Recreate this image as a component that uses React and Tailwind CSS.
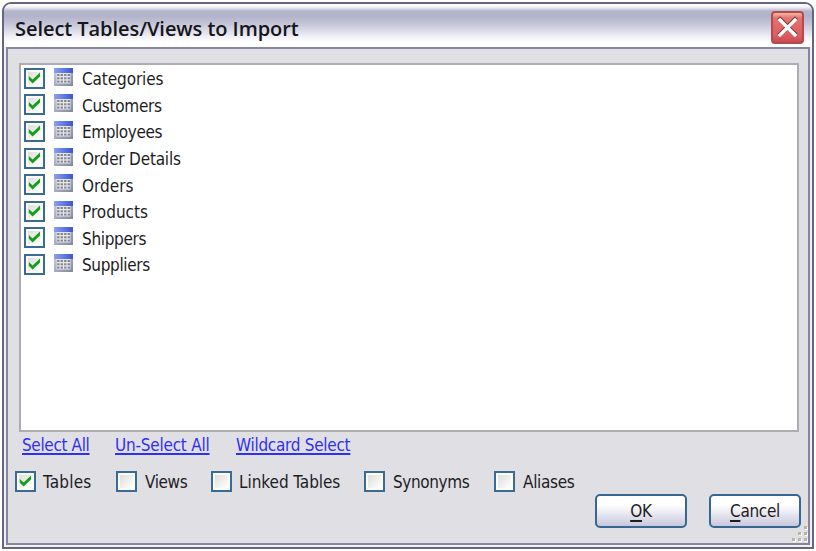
import React from "react";

const rows = [
  ["Categories", "tracking-[-0.1px]"],
  ["Customers", "tracking-[-0.28px]"],
  ["Employees", "tracking-[-0.42px]"],
  ["Order Details", "tracking-[-0.2px]"],
  ["Orders", "tracking-[0px]"],
  ["Products", "tracking-[0px]"],
  ["Shippers", "tracking-[-0.33px]"],
  ["Suppliers", "tracking-[-0.36px]"],
];

const filters = [
  ["Tables", "w-[101px] gap-[7px] tracking-[0.2px]", true],
  ["Views", "w-[95px] gap-[8px] tracking-[-0.4px]", false],
  ["Linked Tables", "w-[153px] gap-[7px] tracking-[-0.05px]", false],
  ["Synonyms", "w-[130px] gap-[8px] tracking-[-0.38px]", false],
  ["Aliases", "w-[90px] gap-[8px] tracking-[-0.33px]", false],
];

const buttons = [
  ["OK", "tracking-[-0.2px]"],
  ["Cancel", "tracking-[-0.3px]"],
];

function Check({ on }) {
  return (
    <span className="flex size-[21px] shrink-0 items-center justify-center border-2 border-[#396b95] bg-[#fbfbfa] p-[2px]">
      <span className="flex size-[13px] shrink-0 items-center justify-center bg-gradient-to-br from-[#dededa] to-white">
        {on && (
          <svg width="13" height="13" viewBox="0 0 13 13" className="shrink-0">
            <path d="M0.8 4 L4.6 7.4 L12 0.6 V4.4 L4.6 11.4 L0.8 7.8 Z" fill="#14a018" />
          </svg>
        )}
      </span>
    </span>
  );
}

function TableIcon() {
  const xs = [3.5, 7, 10.5, 14];
  return (
    <svg width="19" height="18" viewBox="0 0 19 18" className="mt-[-3px] shrink-0">
      <defs>
        <linearGradient id="head" x1="0" x2="1">
          <stop offset="0" stopColor="#8ba1f4" />
          <stop offset="1" stopColor="#3d55cf" />
        </linearGradient>
        <linearGradient id="body" x1="0" x2="1" y1="0" y2="1">
          <stop offset="0" stopColor="#ced2e0" />
          <stop offset="1" stopColor="#8186a0" />
        </linearGradient>
      </defs>
      <rect width="19" height="18" fill="url(#body)" />
      <rect width="19" height="5" fill="url(#head)" />
      <rect x="2.5" y="5" width="14" height="10.5" fill="#e6e7ec" />
      {[6, 9.3, 12.6].map((y) =>
        xs.map((x) => <rect key={x + "-" + y} x={x - 0.4} y={y} width="2.4" height="2" fill="#85878f" />)
      )}
    </svg>
  );
}

export default function App() {
  return (
    <div className="h-[551px] w-[816px] overflow-hidden bg-white pl-[2px] pt-[2px] font-['DejaVu_Sans_Condensed','DejaVu_Sans',sans-serif] text-[17px] text-[#1d1d1f]">
      <div className="flex h-[547px] w-[812px] flex-col rounded-t-[9px] border-2 border-[#666681] bg-[#f0f0f6] px-[2px] pb-[2px]">
        <header className="mx-[-2px] flex h-[43px] shrink-0 items-start justify-between rounded-t-[7px] bg-[linear-gradient(180deg,#fff_0px,#f5f5fa_3px,#b5b5cc_7px,#b2b2ca_12px,#c8c8da_21px,#eeeef5_32px,#fff_38px,#fff_43px)] pl-[11px] pr-[8px]">
          <h1 className="mt-[11px] whitespace-nowrap font-['Open_Sans',sans-serif] text-[20px] font-semibold leading-[28px] tracking-[-0.05px] text-[#15151a]">
            Select Tables/Views to Import
          </h1>
          <button aria-label="Close" className="mt-[7px] flex size-[33px] items-center justify-center rounded-[4px] border-2 border-[#b44a50] bg-[linear-gradient(180deg,#f2b9a0_0px,#e27270_5px,#dc5f62_22px,#c94b50_29px)]">
            <svg width="23" height="23" viewBox="0 0 23 23" fill="none" strokeLinecap="square">
              <path d="M4 3 L19 18 M19 3 L4 18" stroke="#803c35" strokeWidth="4" />
              <path d="M4 4 L19 19 M19 4 L4 19" stroke="#fff" strokeWidth="3.3" />
            </svg>
          </button>
        </header>
        <main className="relative flex grow flex-col border-2 border-[#86869f] bg-[#e0dfe4]">
          <section className="ml-[11px] mt-[14px] h-[369px] w-[780px] shrink-0 border-2 border-[#acacb1] bg-white pl-[3px]">
            {rows.map(([name, cls]) => (
              <div key={name} className="flex h-[26.6px] items-center">
                <Check on />
                <span className="w-[9px] shrink-0" />
                <TableIcon />
                <span className={"ml-[9px] whitespace-nowrap pt-[2px] leading-[20px] " + cls}>{name}</span>
              </div>
            ))}
          </section>
          <nav className="flex h-[26px] shrink-0 items-center whitespace-nowrap pl-[14px] pt-[2px] text-[#3030f5]">
            <span className="w-[93px] tracking-[-0.35px] underline decoration-[#3030f5] decoration-2 underline-offset-[2px]">Select All</span>
            <span className="w-[121px] tracking-[-0.22px] underline decoration-[#3030f5] decoration-2 underline-offset-[2px]">Un-Select All</span>
            <span className="tracking-[-0.28px] underline decoration-[#3030f5] decoration-2 underline-offset-[2px]">Wildcard Select</span>
          </nav>
          <div className="mt-[13px] flex h-[21px] shrink-0 items-center pl-[7px]">
            {filters.map(([name, cls, on]) => (
              <label key={name} className={"flex shrink-0 items-center whitespace-nowrap " + cls}>
                <Check on={on} />
                <span className="pt-[2px] leading-[19px]">{name}</span>
              </label>
            ))}
          </div>
          <div className="mt-[2px] flex shrink-0 justify-end gap-[22px] pr-[7px]">
            {buttons.map(([name, cls]) => (
              <button key={name} className={"h-[34px] w-[92px] rounded-[5px] border-2 border-[#376790] bg-gradient-to-b from-white from-30% to-[#c8c8dd] leading-[20px] " + cls}>
                <span className="underline decoration-2 underline-offset-[3px]">{name[0]}</span>
                {name.slice(1)}
              </button>
            ))}
          </div>
          <svg className="absolute bottom-0 right-0" width="17" height="17" viewBox="0 0 17 17">
            {[[13, 0], [7, 6], [13, 6], [1, 12], [7, 12], [13, 12]].map(([x, y]) => (
              <g key={x + "-" + y}>
                <rect x={x + 1} y={y + 1} width="3" height="3" fill="#fff" />
                <rect x={x} y={y} width="3" height="3" fill="#b9b5a6" />
              </g>
            ))}
          </svg>
        </main>
      </div>
    </div>
  );
}
